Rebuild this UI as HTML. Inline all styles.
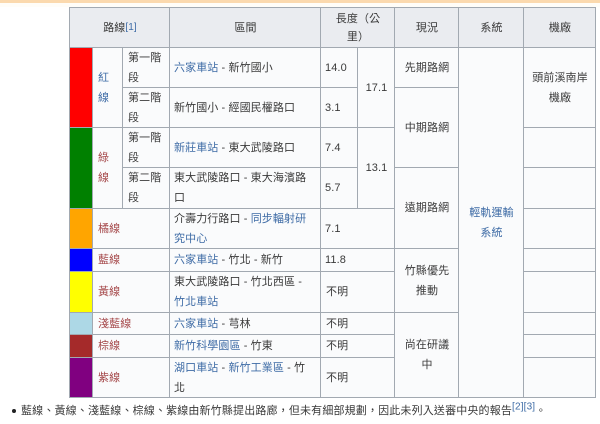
<!DOCTYPE html>
<html lang="zh-Hant"><head><meta charset="utf-8">
<style>
html,body{margin:0;padding:0;background:#fff}
body{width:600px;height:424px;overflow:hidden;position:relative;font-family:"Liberation Sans","Noto Sans CJK TC",sans-serif;font-size:11px;color:#3a3a3a}
#w{position:absolute;left:0;top:0;width:600px;height:424px;filter:blur(.3px)}
.top{position:absolute;left:0;top:0;width:600px;height:3px;background:#fbd9ae}
.top2{position:absolute;left:0;top:3px;width:600px;height:4px;background:#fffdf8}
.c{position:absolute;box-sizing:border-box;border:1px solid #a2a9b1;background:#fafbfc;display:flex;align-items:center;line-height:20px;padding:0 4px 0 5px;letter-spacing:.1px}
.s{padding-left:4px}
.h{background:#eaecf0;justify-content:center;text-align:center;font-size:11px;line-height:18px}
.m{justify-content:center;text-align:center}
.k{border:1px solid #a2a9b1}
a{color:#3f6ca6;text-decoration:none}
.r{color:#a5484a}
sup{font-size:10px;line-height:0;color:#3f6ca6}
.n{font-size:11px}
.note{position:absolute;left:21px;top:401px;white-space:nowrap;line-height:20px;font-size:11px;letter-spacing:.16px}
.dot{position:absolute;left:12px;top:409px;width:4px;height:4px;border-radius:50%;background:#202122}
</style></head><body><div id="w">
<div class="top"></div><div class="top2"></div>

<div class="c h" style="left:69px;top:7px;width:101px;height:41px">路線<sup>[1]</sup></div>
<div class="c h" style="left:169px;top:7px;width:152px;height:41px">區間</div>
<div class="c h" style="left:320px;top:7px;width:75px;height:41px">長度（公<br>里）</div>
<div class="c h" style="left:394px;top:7px;width:65px;height:41px">現況</div>
<div class="c h" style="left:458px;top:7px;width:66px;height:41px">系統</div>
<div class="c h" style="left:523px;top:7px;width:73px;height:41px">機廠</div>

<div class="c k" style="left:69px;top:47px;width:24px;height:81px;background:#f00"></div>
<div class="c k" style="left:69px;top:127px;width:24px;height:82px;background:#008000"></div>
<div class="c k" style="left:69px;top:208px;width:24px;height:41px;background:#ffa500"></div>
<div class="c k" style="left:69px;top:248px;width:24px;height:24px;background:#00f"></div>
<div class="c k" style="left:69px;top:271px;width:24px;height:42px;background:#ff0"></div>
<div class="c k" style="left:69px;top:312px;width:24px;height:23px;background:#add8e6"></div>
<div class="c k" style="left:69px;top:334px;width:24px;height:24px;background:#a52a2a"></div>
<div class="c k" style="left:69px;top:357px;width:24px;height:41px;background:#800080"></div>

<div class="c" style="left:92px;top:47px;width:31px;height:81px;padding:0 8px 0 5px"><a>紅線</a></div>
<div class="c r" style="left:92px;top:127px;width:31px;height:82px;padding:0 8px 0 5px">綠線</div>
<div class="c r" style="left:92px;top:208px;width:78px;height:41px">橘線</div>
<div class="c r" style="left:92px;top:248px;width:78px;height:24px">藍線</div>
<div class="c r" style="left:92px;top:271px;width:78px;height:42px">黃線</div>
<div class="c r" style="left:92px;top:312px;width:78px;height:23px">淺藍線</div>
<div class="c r" style="left:92px;top:334px;width:78px;height:24px">棕線</div>
<div class="c r" style="left:92px;top:357px;width:78px;height:41px">紫線</div>

<div class="c" style="left:122px;top:47px;width:48px;height:41px">第一階段</div>
<div class="c" style="left:122px;top:87px;width:48px;height:41px">第二階段</div>
<div class="c" style="left:122px;top:127px;width:48px;height:41px">第一階段</div>
<div class="c" style="left:122px;top:167px;width:48px;height:42px">第二階段</div>

<div class="c s" style="left:169px;top:47px;width:152px;height:41px"><span><a>六家車站</a> - 新竹國小</span></div>
<div class="c s" style="left:169px;top:87px;width:152px;height:41px">新竹國小 - 經國民權路口</div>
<div class="c s" style="left:169px;top:127px;width:152px;height:41px"><span><a>新莊車站</a> - 東大武陵路口</span></div>
<div class="c s" style="left:169px;top:167px;width:152px;height:42px">東大武陵路口 - 東大海濱路口</div>
<div class="c s" style="left:169px;top:208px;width:152px;height:41px"><span>介壽力行路口 - <a>同步輻射研究中心</a></span></div>
<div class="c s" style="left:169px;top:248px;width:152px;height:24px"><span><a>六家車站</a> - 竹北 - 新竹</span></div>
<div class="c s" style="left:169px;top:271px;width:152px;height:42px"><span>東大武陵路口 - 竹北西區 - <a>竹北車站</a></span></div>
<div class="c s" style="left:169px;top:312px;width:152px;height:23px"><span><a>六家車站</a> - 芎林</span></div>
<div class="c s" style="left:169px;top:334px;width:152px;height:24px"><span><a>新竹科學園區</a> - 竹東</span></div>
<div class="c s" style="left:169px;top:357px;width:152px;height:41px"><span><a>湖口車站</a> - <a>新竹工業區</a> - 竹北</span></div>

<div class="c n s" style="left:320px;top:47px;width:38px;height:41px">14.0</div>
<div class="c n s" style="left:320px;top:87px;width:38px;height:41px">3.1</div>
<div class="c n s" style="left:320px;top:127px;width:38px;height:41px">7.4</div>
<div class="c n s" style="left:320px;top:167px;width:38px;height:42px">5.7</div>
<div class="c n m" style="left:357px;top:47px;width:38px;height:81px">17.1</div>
<div class="c n m" style="left:357px;top:127px;width:38px;height:82px">13.1</div>
<div class="c n s" style="left:320px;top:208px;width:75px;height:41px">7.1</div>
<div class="c n s" style="left:320px;top:248px;width:75px;height:24px">11.8</div>
<div class="c" style="left:320px;top:271px;width:75px;height:42px">不明</div>
<div class="c" style="left:320px;top:312px;width:75px;height:23px">不明</div>
<div class="c" style="left:320px;top:334px;width:75px;height:24px">不明</div>
<div class="c" style="left:320px;top:357px;width:75px;height:41px">不明</div>

<div class="c m" style="left:394px;top:47px;width:65px;height:41px">先期路網</div>
<div class="c m" style="left:394px;top:87px;width:65px;height:81px">中期路網</div>
<div class="c m" style="left:394px;top:167px;width:65px;height:82px">遠期路網</div>
<div class="c m" style="left:394px;top:248px;width:65px;height:65px">竹縣優先推動</div>
<div class="c m" style="left:394px;top:312px;width:65px;height:86px">尚在研議中</div>

<div class="c m" style="left:458px;top:47px;width:66px;height:351px"><a>輕軌運輸系統</a></div>

<div class="c m" style="left:523px;top:47px;width:73px;height:81px">頭前溪南岸機廠</div>
<div class="c" style="left:523px;top:127px;width:73px;height:41px"></div>
<div class="c" style="left:523px;top:167px;width:73px;height:42px"></div>
<div class="c" style="left:523px;top:208px;width:73px;height:41px"></div>
<div class="c" style="left:523px;top:248px;width:73px;height:24px"></div>
<div class="c" style="left:523px;top:271px;width:73px;height:42px"></div>
<div class="c" style="left:523px;top:312px;width:73px;height:23px"></div>
<div class="c" style="left:523px;top:334px;width:73px;height:24px"></div>
<div class="c" style="left:523px;top:357px;width:73px;height:41px"></div>

<div class="dot"></div>
<div class="note">藍線、黃線、淺藍線、棕線、紫線由新竹縣提出路廊，但未有細部規劃，因此未列入送審中央的報告<sup>[2][3]</sup>。</div>
</div></body></html>
